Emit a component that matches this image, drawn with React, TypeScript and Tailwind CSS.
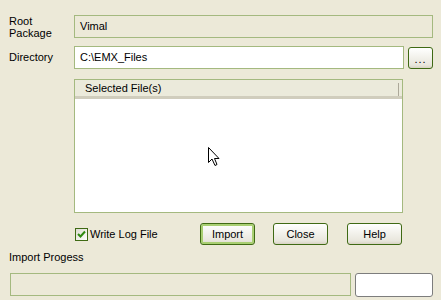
import React from "react";

const font = { fontFamily: '"Liberation Sans", Arial, sans-serif' };

function XPButton({ label, isDefault, className }: { label: string; isDefault?: boolean; className?: string }) {
  return (
    <div
      className={
        "flex items-center justify-center rounded-[3px] border border-[#3f6a14] text-[11px] text-black bg-[linear-gradient(to_bottom,#ffffff_0%,#f4f3ee_40%,#e8e6dc_85%,#d8d3c4_100%)] " +
        (isDefault ? "shadow-[inset_0_0_0_2px_#a9cf72] " : "") +
        (className ?? "")
      }
    >
      {label}
    </div>
  );
}

export default function App() {
  return (
    <div className="w-[441px] h-[300px] bg-[#ece9d8] text-[11px] text-black overflow-hidden relative" style={font}>
      <div className="flex flex-col pt-[15px]">
        {/* Root Package */}
        <div className="flex h-[23px]">
          <div className="w-[74px] pl-[9px] leading-[12px] flex flex-col justify-center">
            <span>Root</span>
            <span>Package</span>
          </div>
          <div className="w-[359px] h-[23px] border border-[#a4b97f] bg-[#ece9d8] flex items-center pl-[5px]">
            Vimal
          </div>
        </div>
        {/* Directory */}
        <div className="flex h-[23px] mt-[8px] items-center">
          <div className="w-[74px] pl-[9px]">Directory</div>
          <div className="w-[330px] h-[23px] border border-[#a4b97f] bg-white flex items-center pl-[5px]">
            C:\EMX_Files
          </div>
          <XPButton label="..." className="ml-[4px] w-[25px] h-[22px] tracking-[1px] leading-none pt-[4px]" />
        </div>
        {/* List */}
        <div className="ml-[74px] mt-[10px] w-[329px] h-[134px] border border-[#a4b97f] bg-white flex flex-col">
          <div className="h-[19px] bg-[#ebeadb] flex items-center pl-[10px] relative border-b-[3px] border-[#d0cdbd]">
            Selected File(s)
            <div className="absolute right-[3px] top-[3px] w-[1px] h-[13px] bg-[#aca899]" />
          </div>
          <div className="flex-1 relative">
            <svg className="absolute left-[133px] top-[48px]" width="12" height="20" viewBox="0 0 12 20">
              <path
                d="M0.5 0.5 L0.5 15.5 L4 12 L7 18.5 L9 17.5 L6.5 11.5 L11 11.5 Z"
                fill="white"
                stroke="black"
                strokeWidth="1"
                strokeLinejoin="miter"
              />
            </svg>
          </div>
        </div>
        {/* Checkbox + buttons */}
        <div className="flex items-center h-[22px] mt-[10px]">
          <div className="ml-[75px] w-[125px] flex items-center">
            <div className="w-[13px] h-[13px] border border-[#3f6a14] bg-[linear-gradient(to_bottom_right,#dcdcd0,#ffffff)] flex items-center justify-center">
              <svg width="9" height="9" viewBox="0 0 9 9">
                <path d="M1 4 L3.5 6.5 L8 1.5" fill="none" stroke="#2f8a10" strokeWidth="2" />
              </svg>
            </div>
            <span className="ml-[2px]">Write Log File</span>
          </div>
          <XPButton label="Import" isDefault className="w-[55px] h-[22px]" />
          <XPButton label="Close" className="ml-[18px] w-[55px] h-[22px]" />
          <XPButton label="Help" className="ml-[19px] w-[55px] h-[22px]" />
        </div>
        <div className="pl-[9px] mt-[5px] h-[14px] leading-[14px]">Import Progess</div>
        <div className="flex mt-[9px] h-[23px]">
          <div className="ml-[10px] w-[341px] h-[23px] border border-[#a4b97f]" />
          <div className="ml-[4px] w-[78px] h-[24px] border border-[#7d7d7d] rounded-[3px] bg-white" />
        </div>
      </div>
    </div>
  );
}
